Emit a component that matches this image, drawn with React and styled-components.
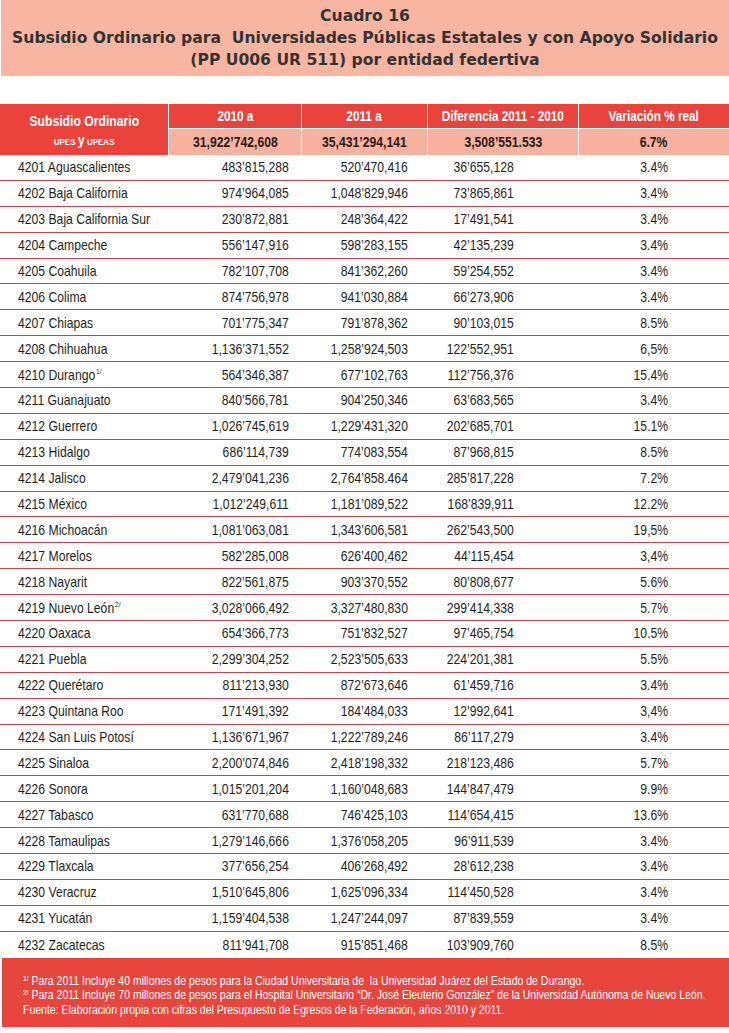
import styled, { createGlobalStyle } from "styled-components";

const rows = [
	["4201 Aguascalientes", "483’815,288", "520’470,416", "36’655,128", "3.4%"],
	["4202 Baja California", "974’964,085", "1,048’829,946", "73’865,861", "3.4%"],
	["4203 Baja California Sur", "230’872,881", "248’364,422", "17’491,541", "3.4%"],
	["4204 Campeche", "556’147,916", "598’283,155", "42’135,239", "3.4%"],
	["4205 Coahuila", "782’107,708", "841’362,260", "59’254,552", "3.4%"],
	["4206 Colima", "874’756,978", "941’030,884", "66’273,906", "3.4%"],
	["4207 Chiapas", "701’775,347", "791’878,362", "90’103,015", "8.5%"],
	["4208 Chihuahua", "1,136’371,552", "1,258’924,503", "122’552,951", "6,5%"],
	["4210 Durango", "564’346,387", "677’102,763", "112’756,376", "15.4%", "1/"],
	["4211 Guanajuato", "840’566,781", "904’250,346", "63’683,565", "3.4%"],
	["4212 Guerrero", "1,026’745,619", "1,229’431,320", "202’685,701", "15.1%"],
	["4213 Hidalgo", "686’114,739", "774’083,554", "87’968,815", "8.5%"],
	["4214 Jalisco", "2,479’041,236", "2,764’858.464", "285’817,228", "7.2%"],
	["4215 México", "1,012’249,611", "1,181’089,522", "168’839,911", "12.2%"],
	["4216 Michoacán", "1,081’063,081", "1,343’606,581", "262’543,500", "19,5%"],
	["4217 Morelos", "582’285,008", "626’400,462", "44’115,454", "3,4%"],
	["4218 Nayarit", "822’561,875", "903’370,552", "80’808,677", "5.6%"],
	["4219 Nuevo León", "3,028’066,492", "3,327’480,830", "299’414,338", "5.7%", "2/"],
	["4220 Oaxaca", "654’366,773", "751’832,527", "97’465,754", "10.5%"],
	["4221 Puebla", "2,299’304,252", "2,523’505,633", "224’201,381", "5.5%"],
	["4222 Querétaro", "811’213,930", "872’673,646", "61’459,716", "3.4%"],
	["4223 Quintana Roo", "171’491,392", "184’484,033", "12’992,641", "3,4%"],
	["4224 San Luis Potosí", "1,136’671,967", "1,222’789,246", "86’117,279", "3.4%"],
	["4225 Sinaloa", "2,200’074,846", "2,418’198,332", "218’123,486", "5.7%"],
	["4226 Sonora", "1,015’201,204", "1,160’048,683", "144’847,479", "9.9%"],
	["4227 Tabasco", "631’770,688", "746’425,103", "114’654,415", "13.6%"],
	["4228 Tamaulipas", "1,279’146,666", "1,376’058,205", "96’911,539", "3.4%"],
	["4229 Tlaxcala", "377’656,254", "406’268,492", "28’612,238", "3.4%"],
	["4230 Veracruz", "1,510’645,806", "1,625’096,334", "114’450,528", "3.4%"],
	["4231 Yucatán", "1,159’404,538", "1,247’244,097", "87’839,559", "3.4%"],
	["4232 Zacatecas", "811’941,708", "915’851,468", "103’909,760", "8.5%"],
];

// right padding of each numeric column
const pads = [13, 20, 65, 61];

const App = () => {
	return (
		<>
			<Global />
			<Page>
				<TitleBox>
					<TitleLine>Cuadro 16</TitleLine>
					<TitleLine>
						Subsidio Ordinario para&nbsp; Universidades Públicas Estatales y con Apoyo Solidario
					</TitleLine>
					<TitleLine>(PP U006 UR 511) por entidad federtiva</TitleLine>
				</TitleBox>

				<Table>
					<FirstHead>
						<Narrow>Subsidio Ordinario</Narrow>
						<SubHead>
							<Narrow>
								UPES <Big>y</Big> UPEAS
							</Narrow>
						</SubHead>
					</FirstHead>
					<HeadCell>
						<Narrow>2010 a</Narrow>
					</HeadCell>
					<HeadCell>
						<Narrow>2011 a</Narrow>
					</HeadCell>
					<HeadCell>
						<Narrow>Diferencia 2011 - 2010</Narrow>
					</HeadCell>
					<HeadCell $last>
						<Narrow>Variación % real</Narrow>
					</HeadCell>
					<TotalCell>
						<Narrow>31,922’742,608</Narrow>
					</TotalCell>
					<TotalCell>
						<Narrow>35,431’294,141</Narrow>
					</TotalCell>
					<TotalCell>
						<Narrow>3,508’551.533</Narrow>
					</TotalCell>
					<TotalCell $last>
						<Narrow>6.7%</Narrow>
					</TotalCell>

					{rows.map((r, i) => (
						<Row key={r[0]} $last={i === rows.length - 1}>
							<NameCell>
								<Narrow $origin="left">
									{r[0]}
									{r[5] && <Sup>{r[5]}</Sup>}
								</Narrow>
							</NameCell>
							{r.slice(1, 5).map((v, j) => (
								<NumCell key={j} $pad={pads[j]}>
									<Narrow $origin="right">{v}</Narrow>
								</NumCell>
							))}
						</Row>
					))}
				</Table>

				<Footer>
					<FootLine>
						<Narrow $origin="left">
							<FootSup>1/</FootSup> Para 2011 Incluye 40 millones de pesos para la Ciudad Universitaria de&nbsp; la Universidad Juárez del Estado de Durango.
						</Narrow>
					</FootLine>
					<FootLine>
						<Narrow $origin="left">
							<FootSup>2/</FootSup> Para 2011 Incluye 70 millones de pesos para el Hospital Universitario “Dr. José Eleuterio González” de la Universidad Autónoma de Nuevo León.
						</Narrow>
					</FootLine>
					<FootLine>
						<Narrow $origin="left">
							Fuente: Elaboración propia con cifras del Presupuesto de Egresos de la Federación, años 2010 y 2011.
						</Narrow>
					</FootLine>
				</Footer>
			</Page>
		</>
	);
};

const Global = createGlobalStyle`
	body {
		margin: 0;
		background: #fff;
	}
`;

const Page = styled.div`
	width: 729px;
	overflow: hidden;
	display: flex;
	flex-direction: column;
	font-family: "Liberation Sans", Arial, sans-serif;
	color: #1e1e1e;
`;

// stands in for Arial Narrow, which is not installed
const Narrow = styled.span`
	display: inline-block;
	white-space: nowrap;
	transform: scaleX(0.84);
	transform-origin: ${(p) => p.$origin || "center"};
`;

const TitleBox = styled.div`
	height: 76px;
	box-sizing: border-box;
	margin-left: 1px;
	padding-top: 5px;
	background: #f8b6a2;
	display: flex;
	flex-direction: column;
	align-items: center;
	font-family: "DejaVu Sans", sans-serif;
	font-weight: bold;
	font-size: 15.6px;
	color: #333;
`;

const TitleLine = styled.div`
	line-height: 22px;
	white-space: nowrap;
`;

const Table = styled.div`
	margin-top: 28px;
	display: grid;
	grid-template-columns: 169px 133px 126px 151px 150px;
	grid-template-rows: 25px 26px;
`;

const FirstHead = styled.div`
	grid-row: 1 / span 2;
	background: #e9433b;
	color: #fff;
	font-weight: bold;
	font-size: 14.5px;
	display: flex;
	flex-direction: column;
	align-items: center;
	padding-top: 9px;
	border-right: 1px solid #fff;
`;

const SubHead = styled.span`
	font-size: 9.5px;
	margin-top: 2px;
`;

const Big = styled.span`
	font-size: 15px;
`;

const HeadCell = styled.div`
	background: #e9433b;
	color: #fff;
	font-weight: bold;
	font-size: 14px;
	display: flex;
	align-items: center;
	justify-content: center;
	border-right: ${(p) => (p.$last ? "none" : "1px solid #fff")};
	border-bottom: 1px solid #fff;
`;

const TotalCell = styled.div`
	background: #f6b29f;
	font-weight: bold;
	font-size: 14.5px;
	color: #2a1a16;
	display: flex;
	align-items: center;
	justify-content: center;
	border-right: ${(p) => (p.$last ? "none" : "1px solid #fff")};
`;

const Row = styled.div`
	grid-column: 1 / -1;
	display: grid;
	grid-template-columns: subgrid;
	height: 25.9px;
	box-sizing: border-box;
	align-items: center;
	font-size: 14.5px;
	border-bottom: ${(p) => (p.$last ? "none" : "1px solid #c4444a")};
`;

const NameCell = styled.div`
	padding-left: 18px;
`;

const NumCell = styled.div`
	text-align: right;
	padding-right: ${(p) => p.$pad}px;
`;

const Sup = styled.sup`
	font-size: 8px;
	vertical-align: 6px;
	line-height: 0;
	margin-left: 1px;
`;

const Footer = styled.div`
	margin-left: 2px;
	height: 69px;
	box-sizing: border-box;
	padding: 16px 0 0 21px;
	background: #e8463d;
	color: #fff;
	font-size: 12.5px;
`;

const FootLine = styled.div`
	line-height: 14.8px;
`;

const FootSup = styled.sup`
	font-size: 8px;
	vertical-align: 4px;
	line-height: 0;
`;

export default App;
